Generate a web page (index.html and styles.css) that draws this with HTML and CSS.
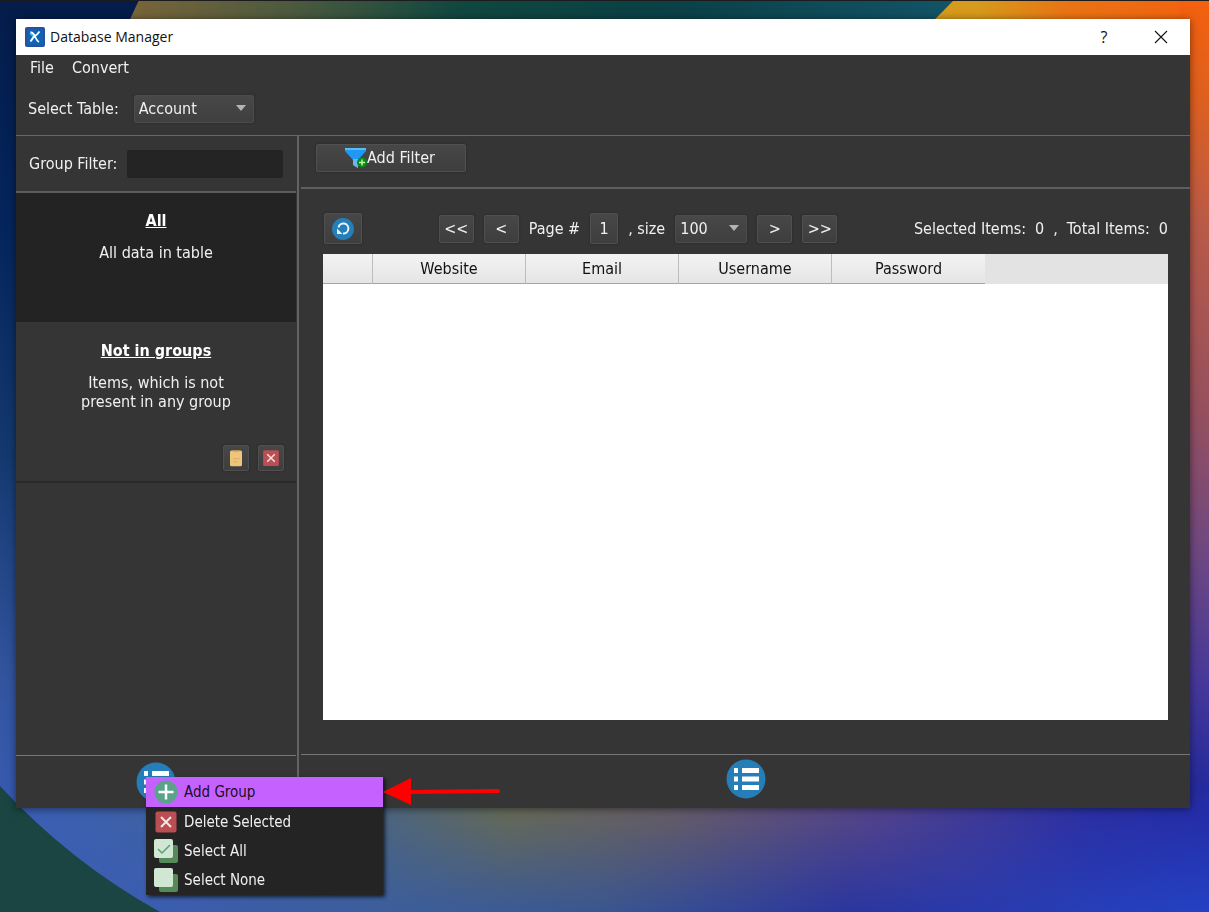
FILE: index.html
```html
<!DOCTYPE html>
<html lang="en">
<head>
<meta charset="utf-8">
<title>Database Manager</title>
<link rel="stylesheet" href="styles.css">
</head>
<body>
<svg class="wallpaper" viewBox="0 0 1209 912" preserveAspectRatio="none" aria-hidden="true">
  <defs>
    <linearGradient id="left" x1="0" y1="0" x2="0" y2="1">
      <stop offset="0" stop-color="#041c4a"/><stop offset=".25" stop-color="#04255c"/><stop offset=".5" stop-color="#14396f"/><stop offset=".75" stop-color="#3355a0"/><stop offset="1" stop-color="#3b5fc0"/>
    </linearGradient>
    <linearGradient id="top" x1="0" y1="0" x2="1" y2="0">
      <stop offset="0" stop-color="#7a653a"/><stop offset=".2" stop-color="#4c5a3e"/><stop offset=".4" stop-color="#10473f"/><stop offset=".65" stop-color="#0b4046"/><stop offset="1" stop-color="#135468"/>
    </linearGradient>
    <linearGradient id="orange" x1="0" y1="0" x2="1" y2="0">
      <stop offset="0" stop-color="#d69a1c"/><stop offset=".35" stop-color="#d69a1c"/><stop offset=".6" stop-color="#e97414"/><stop offset="1" stop-color="#f4600e"/>
    </linearGradient>
    <linearGradient id="right" x1="0" y1="0" x2="0" y2="1">
      <stop offset="0" stop-color="#f4600e"/><stop offset=".1" stop-color="#e0601e"/><stop offset=".25" stop-color="#b85a48"/><stop offset=".45" stop-color="#96505e"/><stop offset=".6" stop-color="#704880"/><stop offset=".75" stop-color="#46389a"/><stop offset=".86" stop-color="#252a9c"/><stop offset="1" stop-color="#2442c4"/>
    </linearGradient>
    <linearGradient id="bottom" x1="0" y1="0" x2="1" y2="0">
      <stop offset="0" stop-color="#3b5fb8"/><stop offset=".28" stop-color="#44648c"/><stop offset=".42" stop-color="#676a54"/><stop offset=".56" stop-color="#665c66"/><stop offset=".72" stop-color="#54448a"/><stop offset=".9" stop-color="#2b2fa4"/><stop offset="1" stop-color="#242ca6"/>
    </linearGradient>
    <linearGradient id="depth-color" x1="0" y1="0" x2="1" y2="0">
      <stop offset="0" stop-color="#3b5cbc"/><stop offset=".32" stop-color="#3c5e9c"/><stop offset=".5" stop-color="#3a5690"/><stop offset=".7" stop-color="#2b369e"/><stop offset="1" stop-color="#2442c4"/>
    </linearGradient>
    <linearGradient id="fade" x1="0" y1="0" x2="0" y2="1">
      <stop offset="0" stop-color="#000"/><stop offset=".2" stop-color="#222"/><stop offset="1" stop-color="#fff"/>
    </linearGradient>
    <mask id="depth"><rect y="800" width="1209" height="112" fill="url(#fade)"/></mask>
  </defs>
  <rect width="600" height="912" fill="url(#left)"/>
  <path d="M139 0H960L925 30H125Z" fill="url(#top)"/>
  <path d="M954 0H1209V100H855Z" fill="url(#orange)"/>
  <rect x="1180" width="29" height="912" fill="url(#right)"/>
  <rect y="800" width="1209" height="112" fill="url(#bottom)"/>
  <rect y="800" width="1209" height="112" fill="url(#depth-color)" mask="url(#depth)"/>
  <path d="M0 786Q70 862 160 912H0Z" fill="#1a4542"/>
  <rect width="1209" height="1" fill="#1c1c1e"/>
</svg>

<svg class="symbols" aria-hidden="true">
  <symbol id="list" viewBox="0 0 40 40">
    <circle cx="20" cy="20" r="19.500" fill="#267eb8"/>
    <path fill="#fff" d="M8 9h4v5H8zM16 9h17v5H16zM8 17.500h4v5H8zM16 17.500h17v5H16zM8 26h4v5H8zM16 26h17v5H16z"/>
  </symbol>
  <symbol id="delete" viewBox="0 0 24 24">
    <rect x="1.500" y="1.500" width="21" height="21" rx="2" fill="#b94f53"/>
    <path d="M7 7l10 10M17 7L7 17" stroke="#f8e4e4" stroke-width="2"/>
  </symbol>
</svg>

<main class="window">
  <header class="titlebar">
    <svg class="app-icon" viewBox="0 0 20 20" aria-hidden="true">
      <rect width="20" height="20" rx="2" fill="#2a4f9c"/><rect x="2" y="2" width="16" height="16" fill="#0f62b4"/>
      <path d="M5 6L9 10L6 14" fill="none" stroke="#35b5e8" stroke-width="2"/>
      <path d="M14.500 4.500Q12 8 10 9T5.500 14.500M5.500 5.500Q8 5 10 9.500T14 15" fill="none" stroke="#fff" stroke-width="1.800"/>
    </svg>
    <h1 class="title">Database Manager</h1>
    <button class="caption-button" aria-label="Help">?</button>
    <button class="caption-button" aria-label="Close"><svg class="close-icon" viewBox="0 0 14 14"><path d="M1 1l12 12M13 1L1 13" stroke="#111" stroke-width="1.100"/></svg></button>
  </header>
  <nav class="menubar"><button class="menu-title">File</button><button class="menu-title">Convert</button></nav>
  <div class="table-picker">
    <label for="table">Select Table:</label>
    <div class="select-box table-select"><select id="table"><option>Account</option></select></div>
  </div>

  <div class="panes">
    <aside class="sidebar">
      <div class="group-filter"><label for="group">Group Filter:</label><input id="group" type="text"></div>
      <section class="group group-active">
        <h2>All</h2>
        <p>All data in table</p>
      </section>
      <section class="group group-rest">
        <h2>Not in groups</h2>
        <p>Items, which is not<br>present in any group</p>
        <div class="group-actions">
          <button class="tool small" aria-label="Paste"><svg viewBox="0 0 24 24"><rect x="4" y="2" width="16" height="21" rx="2" fill="#efc47b"/><path d="M8 2h8v2H8z" fill="#d9a75c"/><path d="M8 13h9M8 17h6" stroke="#d9a75c"/></svg></button>
          <button class="tool small" aria-label="Delete"><svg viewBox="0 0 24 24"><use href="#delete"/></svg></button>
        </div>
      </section>
      <footer class="pane-footer side-footer">
        <div class="menu-anchor">
          <button class="round" aria-label="Group actions"><svg viewBox="0 0 40 40"><use href="#list"/></svg></button>
          <div class="popup" role="menu">
            <button class="item item-hot" role="menuitem"><svg viewBox="0 0 24 24"><circle cx="12" cy="12" r="11.500" fill="#58a38a"/><path d="M12 4.500v15M4.500 12h15" stroke="#fff" stroke-width="2.500"/></svg>Add Group</button>
            <button class="item" role="menuitem"><svg viewBox="0 0 24 24"><use href="#delete"/></svg>Delete Selected</button>
            <button class="item" role="menuitem"><svg viewBox="0 0 24 24"><rect x="5" y="6" width="19" height="18" rx="2" fill="#558a59"/><rect width="19" height="19" rx="2" fill="#d2e6d4"/><path d="M4 10l4 4 8-8" fill="none" stroke="#57a078" stroke-width="1.500"/></svg>Select All</button>
            <button class="item" role="menuitem"><svg viewBox="0 0 24 24"><rect x="5" y="6" width="19" height="18" rx="2" fill="#558a59"/><rect width="19" height="19" rx="2" fill="#d2e6d4"/></svg>Select None</button>
            <svg class="pointer" viewBox="0 0 118 28" aria-hidden="true"><path d="M0 15L28 1V28Z" fill="#f00"/><path d="M26 15L115 14" stroke="#f00" stroke-width="4" stroke-linecap="round"/></svg>
          </div>
        </div>
      </footer>
    </aside>

    <section class="content">
      <div class="filter-bar">
        <button class="tool add-filter"><svg viewBox="0 0 22 22" aria-hidden="true"><path d="M0 1h21v3l-8 9v8l-5-3v-5L0 4z" fill="#2298f5"/><path d="M0 1h21v2H0z" fill="#52c0f0"/><path d="M8 12h5v9l-5-3z" fill="#66b8ee"/><circle cx="17" cy="15.500" r="5" fill="#0a8a16"/><path d="M17 12.500v6M14 15.500h6" stroke="#b8f5a4" stroke-width="1.500"/></svg>Add Filter</button>
      </div>
      <div class="data-area">
        <div class="pager">
          <button class="tool refresh" aria-label="Refresh"><svg viewBox="0 0 22 22"><circle cx="11" cy="11" r="11" fill="#267eb8"/><path d="M6.500 9.500A5 5 0 1 1 11 15.500" fill="none" stroke="#e8f4fb" stroke-width="2"/><path d="M5 11h6v5.500H5z" fill="#267eb8"/><path d="M5 16v-5.500l5.500 5.500z" fill="#e8f4fb"/></svg></button>
          <div class="page-controls">
            <button class="tool page">&lt;&lt;</button>
            <button class="tool page">&lt;</button>
            <label for="page-number">Page #</label>
            <input class="tool page-number" id="page-number" type="text" value="1">
            <label for="size">, size</label>
            <div class="select-box size-select"><select id="size"><option>100</option></select></div>
            <button class="tool page">&gt;</button>
            <button class="tool page">&gt;&gt;</button>
          </div>
          <div class="totals"><span>Selected Items:</span><span>0</span><span>,</span><span>Total Items:</span><span>0</span></div>
        </div>
        <div class="grid">
          <table>
            <thead><tr><th class="check-column"></th><th>Website</th><th>Email</th><th>Username</th><th>Password</th></tr></thead>
          </table>
        </div>
      </div>
      <footer class="pane-footer content-footer"><button class="round" aria-label="Item actions"><svg viewBox="0 0 40 40"><use href="#list"/></svg></button></footer>
    </section>
  </div>
</main>
</body>
</html>
```
FILE: styles.css
```css
* { box-sizing: border-box; }
body {
  margin: 0;
  min-height: 100vh;
  padding: 19px 19px 104px 16px;
  display: flex;
  background: #20489c;
  color: #f0f0f0;
  font: 16px/20px "DejaVu Sans Condensed", "Noto Sans", sans-serif;
}
button, input, select { font: inherit; color: inherit; }
button { padding: 0; border: 0; background: none; }
svg { display: block; }
h1, h2, p { margin: 0; font-size: inherit; }

.wallpaper { position: fixed; inset: 0; width: 100%; height: 100%; z-index: -1; }
.symbols { position: absolute; width: 0; height: 0; }

.window {
  flex: 1;
  min-width: 0;
  display: flex;
  flex-direction: column;
  background: #353535;
  box-shadow: 0 1px 8px rgba(0, 0, 0, .5);
}
.titlebar { height: 36px; display: flex; align-items: center; background: #fff; color: #111; padding-left: 9px; }
.app-icon { width: 20px; height: 20px; margin-right: 5px; }
.title { flex: 1; font: 14px/20px "Open Sans", sans-serif; }
.caption-button { width: 56px; height: 36px; display: flex; align-items: center; justify-content: center; font-family: "Open Sans", sans-serif; }
.caption-button:last-child { width: 58px; }
.close-icon { width: 14px; height: 14px; }
.menubar { display: flex; gap: 18px; padding: 3px 14px 2px; }
.table-picker { display: flex; align-items: center; gap: 15px; padding: 15px 12px 12px; }

.select-box {
  position: relative;
  border: 1px solid #4c4c4c;
  border-radius: 2px;
  background: linear-gradient(#484848, #3f3f3f);
  box-shadow: 0 0 2px #222;
}
.select-box::after {
  content: "";
  position: absolute;
  right: 7px;
  top: 9px;
  border: 5px solid transparent;
  border-top: 6px solid #b4b4b4;
  border-bottom: 0;
  pointer-events: none;
}
select { appearance: none; width: 100%; height: 26px; padding: 0 4px; border: 0; background: none; }
.table-select { width: 120px; }
.size-select { width: 72px; }

.panes { flex: 1; display: flex; border-top: 1px solid #666; }
.sidebar { width: 283px; display: flex; flex-direction: column; padding-right: 1px; border-right: 2px solid #626262; }
.group-filter { height: 57px; display: flex; align-items: center; gap: 10px; padding: 0 13px; border-bottom: 2px solid #5c5c5c; }
.group-filter input { flex: 1; min-width: 0; height: 28px; border: 0; border-radius: 2px; background: #242424; }
.group { text-align: center; }
.group h2 { text-decoration: underline; margin-bottom: 12px; color: #fff; }
.group p { line-height: 19px; }
.group-active { height: 129px; padding-top: 18px; background: #232323; }
.group-rest { height: 161px; padding: 19px 12px 10px; display: flex; flex-direction: column; border-bottom: 2px solid #292929; }
.group-actions { display: flex; justify-content: flex-end; gap: 9px; margin-top: auto; }

.tool {
  display: flex;
  align-items: center;
  justify-content: center;
  border: 1px solid #505050;
  border-radius: 2px;
  background: linear-gradient(#474747, #3e3e3e);
  box-shadow: 0 0 2px #222;
}
.small { width: 26px; height: 26px; }
.small svg { width: 18px; height: 18px; }
.pane-footer { margin-top: auto; display: flex; justify-content: center; border-top: 1px solid #777; }
.side-footer { height: 53px; padding-top: 6px; }
.content-footer { height: 54px; padding-top: 4px; }
.round, .round svg { width: 40px; height: 40px; }
.menu-anchor { position: relative; }
.popup {
  position: absolute;
  left: 10px;
  top: 15px;
  width: 237px;
  padding-bottom: 1px;
  background: #242424;
  box-shadow: 2px 2px 4px rgba(0, 0, 0, .7);
  font-size: 15px;
  z-index: 1;
}
.item { width: 100%; height: 29px; display: flex; align-items: center; gap: 6px; padding-left: 8px; }
.item svg { width: 24px; height: 24px; }
.item-hot { height: 30px; background: #c562ff; color: #1b0d26; }
.pointer { position: absolute; left: 100%; top: 0; width: 118px; height: 28px; }

.content { flex: 1; min-width: 0; display: flex; flex-direction: column; padding-left: 2px; }
.filter-bar { height: 53px; padding: 8px 15px; border-bottom: 2px solid #5e5e5e; }
.add-filter { width: 150px; height: 28px; padding-right: 2px; }
.add-filter svg { width: 22px; height: 22px; }
.data-area { flex: 1; display: flex; flex-direction: column; padding: 24px 22px 34px; }
.pager { display: flex; align-items: center; justify-content: space-between; height: 31px; margin-bottom: 10px; }
.refresh { width: 38px; height: 31px; margin-left: 1px; }
.refresh svg { width: 22px; height: 22px; }
.page-controls { display: flex; align-items: center; gap: 10px; }
.page { width: 35px; height: 28px; }
.page-number { width: 28px; height: 31px; padding: 0; text-align: center; }
.totals { display: flex; gap: 9px; }
.grid { flex: 1; background: #fff; }
.grid table { width: 100%; border-collapse: separate; border-spacing: 0; table-layout: fixed; }
.grid thead { background: #e3e3e3; }
.grid tr { display: flex; height: 30px; }
.grid th {
  width: 153px;
  padding: 5px 0 4px;
  background: linear-gradient(#f3f3f3, #e5e5e5);
  border-right: 1px solid #bdbdbd;
  border-bottom: 1px solid #a5a5a5;
  color: #111;
  font-weight: 400;
}
.grid th:last-child { border-right: 0; }
.grid .check-column { width: 50px; }
```
